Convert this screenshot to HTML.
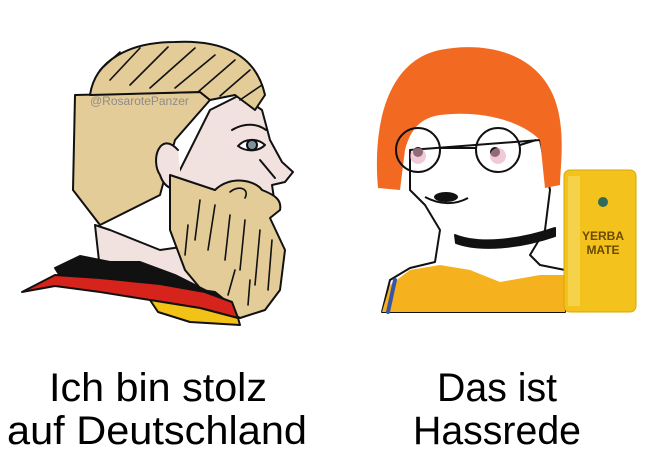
<!DOCTYPE html>
<html><head><style>
html,body{margin:0;padding:0;background:#fff;width:652px;height:459px;overflow:hidden}
svg{display:block}
text{font-family:"Liberation Sans",Arial,sans-serif}
</style></head><body>
<svg width="652" height="459" viewBox="0 0 652 459" xmlns="http://www.w3.org/2000/svg">
<rect width="652" height="459" fill="#fff"/>
<!-- CHAD -->
<g stroke="#111" stroke-width="2" stroke-linejoin="round" stroke-linecap="round">
  <path d="M95,225 L100,270 L170,300 L240,318 L245,300 L215,285 L190,260 L170,190 L210,110 L240,95 L262,110 L270,140 L282,162 L293,172 L285,182 L272,185 L275,205 L265,212 L230,240 L160,250 L110,230 Z" fill="#f2e2df"/>
  <path d="M75,95 L73,190 L100,225 L160,195 L175,140 L210,100 L200,92 Z" fill="#e4cc98"/>
  <path d="M90,95 C95,60 130,42 175,42 C215,40 255,50 265,95 L255,110 L235,95 L210,100 L200,92 L90,95 Z" fill="#e4cc98"/>
  <path d="M178,150 C160,130 150,160 160,175 C165,190 175,190 182,188" fill="#f2e2df"/>
  <path d="M170,175 L215,190 C230,175 255,180 262,190 C275,195 282,200 280,210 L270,218 L285,250 L280,290 L265,310 L240,318 L210,300 L185,270 L170,230 Z" fill="#e4cc98"/>
  <path d="M55,268 L80,256 L110,262 L140,262 L175,275 L205,290 L225,300 L215,292 L160,284 L100,278 L60,276 Z" fill="#111"/>
  <path d="M22,292 L55,275 L100,278 L160,284 L205,292 L232,302 L238,318 L200,308 L150,300 L100,292 L55,286 Z" fill="#d6231b"/>
  <path d="M150,300 L200,308 L238,318 L240,325 L190,322 L158,312 Z" fill="#f2c316"/>
  <path d="M238,146 C245,138 258,138 265,145 C258,152 246,152 238,146 Z" fill="#fff"/>
  <circle cx="252" cy="145" r="5" fill="#7f939e"/>
  <path d="M232,130 C245,122 258,124 266,130" fill="none"/>
  <path d="M260,160 L275,178" fill="none"/>
</g>
<g stroke="#111" stroke-width="1.6" fill="none" stroke-linecap="round">
  <path d="M110,80 L140,48"/><path d="M130,85 L168,47"/><path d="M150,88 L195,48"/><path d="M175,88 L215,55"/><path d="M198,92 L235,60"/><path d="M220,96 L250,70"/><path d="M240,100 L262,85"/><path d="M100,70 L120,52"/>
  <path d="M200,200 L195,240"/><path d="M215,205 L208,250"/><path d="M230,215 L225,260"/><path d="M245,220 L240,270"/><path d="M260,230 L255,285"/><path d="M272,240 L268,290"/><path d="M188,225 L185,255"/><path d="M250,280 L248,305"/><path d="M235,270 L228,295"/>
  <path d="M230,192 C238,185 250,188 245,198"/>
</g>
<text x="90" y="105" font-size="12" fill="#8c8c8c">@RosarotePanzer</text>
<!-- GIRL -->
<g stroke="#111" stroke-width="2" stroke-linejoin="round" stroke-linecap="round">
  <path d="M382,312 L390,280 L410,268 L435,262 L440,230 L425,205 L410,190 L410,150 L540,140 L550,190 L545,230 L530,255 L540,265 L565,270 L565,312 Z" fill="#fff"/>
  <path d="M382,312 L390,285 L410,270 L440,265 L470,270 L500,282 L540,275 L565,275 L565,312 Z" fill="#f5b11e" stroke="none"/>
  <path d="M388,312 L395,280" stroke="#3856a8" stroke-width="4"/>
  <path d="M455,235 C480,245 520,240 555,228 L555,236 C520,248 480,252 456,243 Z" fill="#111"/>
</g>
<path d="M378,188 C372,120 390,60 440,50 C490,40 545,55 558,110 C565,140 560,170 560,185 L545,188 L540,140 C520,120 480,110 440,115 C420,118 410,130 405,150 L400,190 Z" fill="#f26a22"/>
<g stroke="#111" stroke-width="2" fill="none">
  <circle cx="418" cy="150" r="22"/><circle cx="498" cy="150" r="22"/>
  <path d="M440,148 L476,148"/><path d="M520,145 L536,140"/>
  <path d="M425,197 C440,205 455,205 468,198"/>
</g>
<ellipse cx="446" cy="197" rx="12" ry="5" fill="#111"/>
<circle cx="418" cy="152" r="5" fill="#111"/><circle cx="495" cy="152" r="5" fill="#111"/>
<circle cx="418" cy="156" r="8" fill="#e7a6c0" opacity=".6"/><circle cx="498" cy="156" r="8" fill="#e7a6c0" opacity=".6"/>
<rect x="564" y="170" width="72" height="142" rx="6" fill="#f3c21d" stroke="#d7a800" stroke-width="1"/>
<rect x="568" y="176" width="12" height="130" fill="#f8dc6a" opacity=".6"/>
<circle cx="603" cy="202" r="5" fill="#2f6b5a"/>
<text x="603" y="240" font-size="12" font-weight="bold" fill="#6b4a00" text-anchor="middle">YERBA</text>
<text x="603" y="254" font-size="12" font-weight="bold" fill="#6b4a00" text-anchor="middle">MATE</text>
<!-- captions -->
<text x="158" y="401" font-size="40" text-anchor="middle" fill="#000" textLength="218" lengthAdjust="spacingAndGlyphs">Ich bin stolz</text>
<text x="157" y="444" font-size="40" text-anchor="middle" fill="#000" textLength="300" lengthAdjust="spacingAndGlyphs">auf Deutschland</text>
<text x="497" y="401" font-size="40" text-anchor="middle" fill="#000" textLength="120" lengthAdjust="spacingAndGlyphs">Das ist</text>
<text x="497" y="444" font-size="40" text-anchor="middle" fill="#000" textLength="168" lengthAdjust="spacingAndGlyphs">Hassrede</text>
</svg>
</body></html>
